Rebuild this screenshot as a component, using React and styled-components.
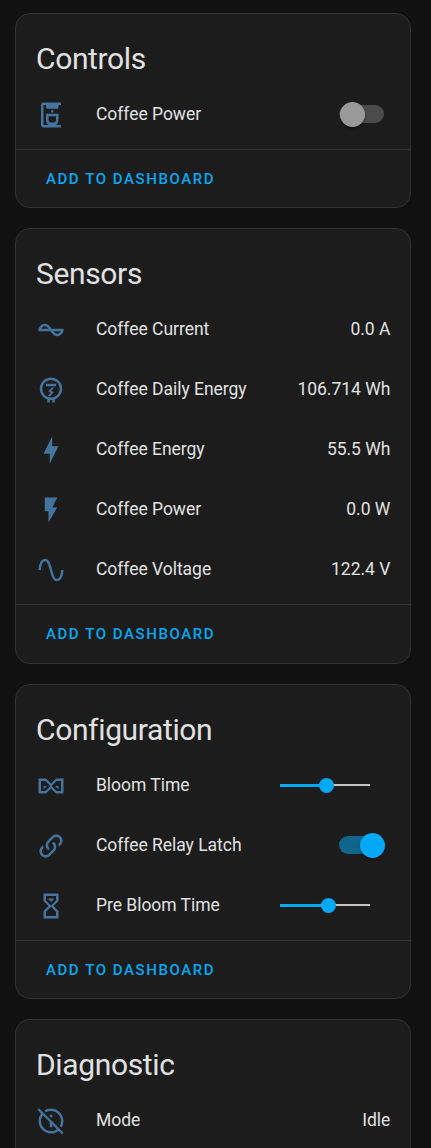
import React from 'react';
import styled, { createGlobalStyle } from 'styled-components';

const GlobalStyle = createGlobalStyle`
  *, *::before, *::after { box-sizing: border-box; }
  html, body { margin: 0; background: #111111; }
  body { font-family: Roboto, sans-serif; color: #e1e1e1; }
`;

const Page = styled.main`
  display: flex;
  flex-direction: column;
  gap: 20px;
  height: 1148px;
  padding: 12.6px 20px 0 15px;
`;

const Card = styled.section`
  flex: ${(p) => (p.$open ? '1 0 0' : 'none')};
  width: 396px;
  border: 1px solid #333333;
  border-bottom-width: ${(p) => (p.$open ? 0 : '1px')};
  border-radius: ${(p) => (p.$open ? '15px 15px 0 0' : '15px')};
  background: #1c1c1c;
`;

const Title = styled.h1`
  margin: 0;
  height: 75.5px;
  padding: 15px 20px 0;
  font-size: 30px;
  font-weight: 400;
  line-height: 60px;
  letter-spacing: -0.36px;
`;

const Rows = styled.div`
  display: flex;
  flex-direction: column;
  gap: 10px;
  padding: 0 20px ${(p) => (p.$open ? 0 : '9.5px')};
`;

const Row = styled.div`
  display: flex;
  align-items: center;
  height: 50px;
  font-size: 17.5px;
  line-height: 25px;
  letter-spacing: -0.03px;
`;

const Icon = styled.svg`
  flex: none;
  width: 30px;
  height: 30px;
  margin-top: 1.5px;
  fill: #44739e;
`;

const Name = styled.span`
  flex: 1;
  margin-left: 30px;
  white-space: nowrap;
`;

const Value = styled.span`
  margin-right: -0.3px;
  white-space: nowrap;
`;

const Footer = styled.div`
  display: flex;
  align-items: center;
  height: 58.5px;
  padding: 1.4px 20px 0;
  border-top: 1px solid #333333;
`;

const TextButton = styled.button`
  padding: 0 10px;
  border: 0;
  background: none;
  color: #03a9f4;
  font: 500 15px/45px Roboto, sans-serif;
  letter-spacing: 1.56px;
  text-transform: uppercase;
`;

const Track = styled.span`
  display: flex;
  align-items: center;
  justify-content: ${(p) => (p.$on ? 'flex-end' : 'flex-start')};
  width: 45px;
  height: 17.5px;
  margin-right: 6px;
  border-radius: 9px;
  background: ${(p) => (p.$on ? '#10658d' : '#4b4b4b')};
`;

const Knob = styled.span`
  flex: none;
  width: 25px;
  height: 25px;
  margin: 1px ${(p) => (p.$on ? '-1px' : '0')} 0 1px;
  border-radius: 50%;
  background: ${(p) => (p.$on ? '#03a9f4' : '#999999')};
  box-shadow: 0 2px 3px rgba(0, 0, 0, 0.35);
`;

const SliderBox = styled.span`
  display: flex;
  align-items: center;
  width: 90px;
  height: 15px;
  margin-right: 20px;
`;

const Filled = styled.span`
  height: 3px;
  background: #03a9f4;
`;

const Thumb = styled.span`
  flex: none;
  width: 15px;
  height: 15px;
  margin: 0 -1px;
  border-radius: 50%;
  background: #03a9f4;
  z-index: 1;
`;

const Rest = styled.span`
  flex: 1;
  height: 2px;
  margin-bottom: 1px;
  background: #c4c4c4;
`;

const paths = {
  coffeeMaker:
    'M20 4V2H6C4.9 2 4 2.9 4 4V20C4 21.1 4.9 22 6 22H20V20H16C17.2 19.1 18 17.6 18 16V11H8V16C8 17.6 8.8 19.1 10 20H6V4H8V6C8 6.55 8.45 7 9 7H17C17.55 7 18 6.55 18 6V4H20M10 13H16V16C16 17.1 15.1 18 14 18H12C10.9 18 10 17.1 10 16V13M13 8A1 1 0 0 0 13 10A1 1 0 0 0 13 8Z',
  currentAc:
    'M12.43 11C12.28 10.84 10 7 7 7S2.32 10.18 2 11V13H11.57C11.72 13.16 14 17 17 17S21.68 13.82 22 13V11H12.43M7 9C8.17 9 9.18 9.85 10 11H4.31C4.78 10.17 5.54 9 7 9M17 15C15.83 15 14.82 14.15 14 13H19.69C19.22 13.83 18.46 15 17 15Z',
  meter:
    'M12 2C16.97 2 21 6.03 21 11C21 14.92 18.5 18.26 15 19.5V22H13V20H11V22H9V19.5C5.5 18.26 3 14.92 3 11C3 6.03 7.03 2 12 2M12 4A7 7 0 0 0 5 11A7 7 0 0 0 12 18A7 7 0 0 0 19 11A7 7 0 0 0 12 4M8 7H16V9H8V7M12.75 10L9.75 13.25L11.8 14.2L10 16.25V17H11.25L14.25 13.75L12.2 12.8L14 10.75V10H12.75Z',
  bolt: 'M11 15H6L13 1V9H18L11 23V15Z',
  flash: 'M7 2V13H10V22L17 10H13L17 2H7Z',
  sine:
    'M16.5 21C13.5 21 12.31 16.76 11.05 12.28C10.14 9.04 9 5 7.5 5C4.11 5 4 11.93 4 12H2C2 11.63 2.06 3 7.5 3C10.5 3 11.71 7.25 12.97 11.74C13.83 14.8 15 19 16.5 19C19.94 19 20.03 12.07 20.03 12H22.03C22.03 12.37 21.97 21 16.5 21Z',
  sandSide:
    'M22 18H16L12 14L8 18H2V6H8L12 10L16 6H22V18M7.5 16L11.5 12L7.5 8H4V16H7.5M12.5 12L16.5 16H20V8H16.5L12.5 12M18 14H17.25L15.25 12H18V14M6 12H8.75L6.75 14H6V12Z',
  link:
    'M10.59 13.41C11 13.8 11 14.44 10.59 14.83C10.2 15.22 9.56 15.22 9.17 14.83C7.22 12.88 7.22 9.71 9.17 7.76L12.71 4.22C14.66 2.27 17.83 2.27 19.78 4.22C21.73 6.17 21.73 9.34 19.78 11.29L18.29 12.78C18.3 11.96 18.17 11.14 17.89 10.36L18.36 9.88C19.54 8.71 19.54 6.81 18.36 5.64C17.19 4.46 15.29 4.46 14.12 5.64L10.59 9.17C9.41 10.34 9.41 12.24 10.59 13.41M13.41 9.17C13.8 8.78 14.44 8.78 14.83 9.17C16.78 11.12 16.78 14.29 14.83 16.24L11.29 19.78C9.34 21.73 6.17 21.73 4.22 19.78C2.27 17.83 2.27 14.66 4.22 12.71L5.71 11.22C5.7 12.04 5.83 12.86 6.11 13.65L5.64 14.12C4.46 15.29 4.46 17.19 5.64 18.36C6.81 19.54 8.71 19.54 9.88 18.36L13.41 14.83C14.59 13.66 14.59 11.76 13.41 10.59C13 10.2 13 9.56 13.41 9.17Z',
  sand:
    'M6 2H18V8L14 12L18 16V22H6V16L10 12L6 8V2M16 16.5L12 12.5L8 16.5V20H16V16.5M12 11.5L16 7.5V4H8V7.5L12 11.5M10 6H14V6.75L12 8.75L10 6.75V6Z',
  infoOff:
    'M22.11 21.46L2.39 1.73L1.11 3L4.06 5.95C2.78 7.62 2 9.72 2 12C2 17.5 6.5 22 12 22C14.28 22 16.37 21.23 18.05 19.94L20.84 22.73L22.11 21.46M12 20C7.58 20 4 16.42 4 12C4 10.27 4.56 8.68 5.5 7.38L11 12.88V17H13V14.88L16.62 18.5C15.32 19.45 13.73 20 12 20M8.17 4.97L6.72 3.5C8.25 2.56 10.06 2 12 2C17.5 2 22 6.5 22 12C22 13.94 21.44 15.75 20.5 17.28L19.03 15.83C19.65 14.69 20 13.39 20 12C20 7.58 16.42 4 12 4C10.61 4 9.31 4.35 8.17 4.97M13 7H11V9H13V7Z',
};

function Toggle({ on }) {
  return (
    <Track $on={on} role="switch" aria-checked={!!on}>
      <Knob $on={on} />
    </Track>
  );
}

function Slider({ filled }) {
  return (
    <SliderBox>
      <Filled style={{ width: filled }} />
      <Thumb />
      <Rest />
    </SliderBox>
  );
}

function Entity({ icon, name, children }) {
  return (
    <Row>
      <Icon viewBox="0 0 24 24">
        <path fillRule="evenodd" d={paths[icon]} />
      </Icon>
      <Name>{name}</Name>
      {children}
    </Row>
  );
}

function EntityCard({ title, open, children }) {
  return (
    <Card $open={open}>
      <Title>{title}</Title>
      <Rows $open={open}>{children}</Rows>
      {!open && (
        <Footer>
          <TextButton>Add to dashboard</TextButton>
        </Footer>
      )}
    </Card>
  );
}

export default function App() {
  return (
    <>
      <GlobalStyle />
      <Page>
        <EntityCard title="Controls">
          <Entity icon="coffeeMaker" name="Coffee Power"><Toggle /></Entity>
        </EntityCard>
        <EntityCard title="Sensors">
          <Entity icon="currentAc" name="Coffee Current"><Value>0.0 A</Value></Entity>
          <Entity icon="meter" name="Coffee Daily Energy"><Value>106.714 Wh</Value></Entity>
          <Entity icon="bolt" name="Coffee Energy"><Value>55.5 Wh</Value></Entity>
          <Entity icon="flash" name="Coffee Power"><Value>0.0 W</Value></Entity>
          <Entity icon="sine" name="Coffee Voltage"><Value>122.4 V</Value></Entity>
        </EntityCard>
        <EntityCard title="Configuration">
          <Entity icon="sandSide" name="Bloom Time"><Slider filled={40} /></Entity>
          <Entity icon="link" name="Coffee Relay Latch"><Toggle on /></Entity>
          <Entity icon="sand" name="Pre Bloom Time"><Slider filled={42} /></Entity>
        </EntityCard>
        <EntityCard title="Diagnostic" open>
          <Entity icon="infoOff" name="Mode"><Value>Idle</Value></Entity>
        </EntityCard>
      </Page>
    </>
  );
}
